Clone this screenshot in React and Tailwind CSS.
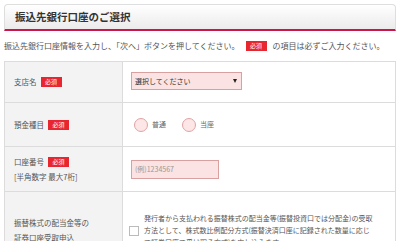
import React from "react";

const Required = ({ className = "" }) => (
  <span
    className={`inline-flex items-center justify-center h-[10px] w-[21px] bg-[#e8262f] text-white text-[6px] leading-none ${className}`}
  >
    必須
  </span>
);

const Radio = ({ label }) => (
  <label className="flex items-center gap-[4px]">
    <span className="w-[14px] h-[14px] rounded-full border border-[#e0a3a3] bg-[#fde6e6]" />
    <span className="text-[7px] text-[#666]">{label}</span>
  </label>
);

const Row = ({ label, children, height, last = false }) => (
  <div
    className={`grid grid-cols-[118px_1fr] ${last ? "" : "border-b border-[#dcdcdc]"}`}
    style={{ height }}
  >
    <div className="bg-[#f3f3f3] border-r border-[#dcdcdc] pl-[9px] flex flex-col justify-center text-[7.5px] text-[#555]">
      {label}
    </div>
    <div className="flex items-center pl-[8px]">{children}</div>
  </div>
);

export default function App() {
  return (
    <div
      className="w-[400px] h-[241px] overflow-hidden bg-white text-[#333]"
      style={{ fontFamily: '"Noto Sans CJK JP", "Noto Sans", sans-serif' }}
    >
      {/* Header */}
      <div className="mx-[4px] pt-[4px]">
        <div className="h-[27px] rounded-t-[4px] border border-[#dedede] border-b-2 border-b-[#c9174b] bg-gradient-to-b from-white to-[#ebebeb] pl-[10px] flex items-center">
          <h1 className="text-[10.5px] font-bold text-[#333]">
            振込先銀行口座のご選択
          </h1>
        </div>
      </div>

      {/* Description */}
      <p className="mt-[9px] px-[4px] flex items-center text-[8px] text-[#555] whitespace-nowrap">
        振込先銀行口座情報を入力し、「次へ」ボタンを押してください。
        <Required className="mx-[6px]" />
        の項目は必ずご入力ください。
      </p>

      {/* Form table */}
      <div className="mx-[4px] mt-[9px] border border-[#dcdcdc]">
        <Row
          height={41}
          label={
            <div className="flex items-center gap-[4px]">
              支店名 <Required />
            </div>
          }
        >
          <div className="w-[111px] h-[18px] -mt-[2px] border border-[#d9a0a0] bg-[#fbe3e3] flex items-center justify-between px-[3px] text-[7px] text-[#333]">
            <span>選択してください</span>
            <span className="w-0 h-0 border-l-[2.5px] border-r-[2.5px] border-t-[4px] border-l-transparent border-r-transparent border-t-[#222] mr-[1px]" />
          </div>
        </Row>

        <Row
          height={44}
          label={
            <div className="flex items-center gap-[4px]">
              預金種目 <Required />
            </div>
          }
        >
          <div className="flex items-center gap-[16px] pl-[3px]">
            <Radio label="普通" />
            <Radio label="当座" />
          </div>
        </Row>

        <Row
          height={45}
          label={
            <div className="flex flex-col gap-[3px]">
              <div className="flex items-center gap-[4px]">
                口座番号 <Required />
              </div>
              <div>[半角数字 最大7桁]</div>
            </div>
          }
        >
          <div className="w-[88px] h-[19px] border border-[#d9a0a0] bg-[#fbe3e3] flex items-center px-[3px] text-[7px] text-[#999]">
            (例)1234567
          </div>
        </Row>

        <Row
          height={76}
          last
          label={
            <div className="leading-[15px]">
              振替株式の配当金等の
              <br />
              証券口座受取申込
            </div>
          }
        >
          <div className="flex items-center gap-[5px] -ml-[2px]">
            <span className="w-[10px] h-[10px] border border-[#bbb] bg-white shrink-0 mt-[2px]" />
            <div className="text-[7px] leading-[12px] text-[#555] whitespace-nowrap">
              発行者から支払われる振替株式の配当金等(振替投資口では分配金)の受取
              <br />
              方法として、株式数比例配分方式(振替決済口座に記録された数量に応じ
              <br />
              て証券口座で受け取る方式)を申し込みます。
            </div>
          </div>
        </Row>
      </div>
    </div>
  );
}
